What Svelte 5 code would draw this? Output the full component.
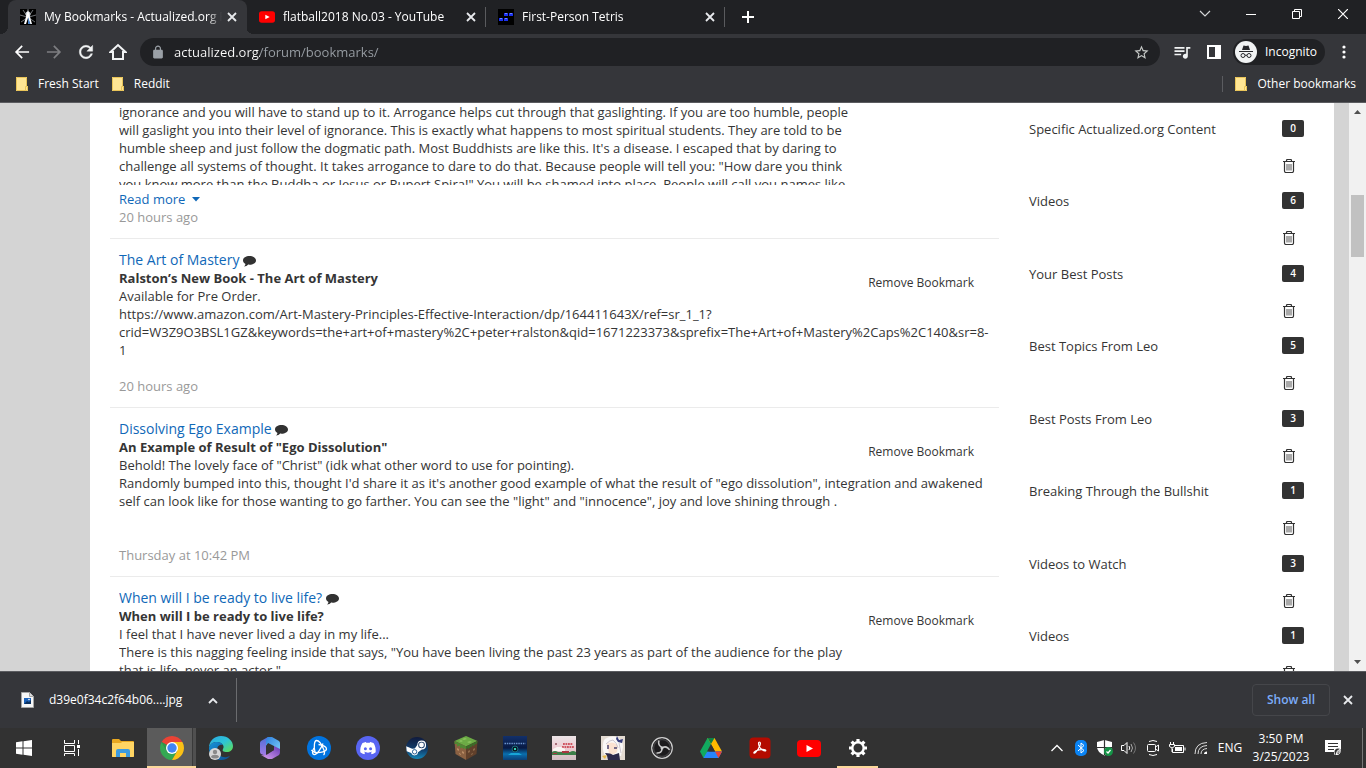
<script>
    let url = 'actualized.org/forum/bookmarks/';
    let expanded = false;

    let tabs = [
        {title: 'My Bookmarks - Actualized.org Forum', icon: 'actualized'},
        {title: 'flatball2018 No.03 - YouTube', icon: 'youtube'},
        {title: 'First-Person Tetris', icon: 'tetris'},
    ];
    let active_tab = tabs[0];

    let posts = [
        {
            title: 'The Art of Mastery',
            heading: 'Ralston’s New Book - The Art of Mastery',
            lines: [
                'Available for Pre Order.',
                'https://www.amazon.com/Art-Mastery-Principles-Effective-Interaction/dp/164411643X/ref=sr_1_1?crid=W3Z9O3BSL1GZ&keywords=the+art+of+mastery%2C+peter+ralston&qid=1671223373&sprefix=The+Art+of+Mastery%2Caps%2C140&sr=8-1',
                '',
            ],
            date: '20 hours ago',
        },
        {
            title: 'Dissolving Ego Example',
            heading: 'An Example of Result of "Ego Dissolution"',
            lines: [
                'Behold! The lovely face of "Christ" (idk what other word to use for pointing).',
                'Randomly bumped into this, thought I\'d share it as it\'s another good example of what the result of "ego dissolution", integration and awakened self can look like for those wanting to go farther. You can see the "light" and "innocence", joy and love shining through .',
                '',
                '',
            ],
            date: 'Thursday at 10:42 PM',
        },
        {
            title: 'When will I be ready to live life?',
            heading: 'When will I be ready to live life?',
            lines: [
                'I feel that I have never lived a day in my life...',
                'There is this nagging feeling inside that says, "You have been living the past 23 years as part of the audience for the play that is life, never an actor."',
            ],
            truncated: true,
        },
    ];

    let folders = [
        {name: 'Specific Actualized.org Content', count: 0},
        {name: 'Videos', count: 6},
        {name: 'Your Best Posts', count: 4},
        {name: 'Best Topics From Leo', count: 5},
        {name: 'Best Posts From Leo', count: 3},
        {name: 'Breaking Through the Bullshit', count: 1},
        {name: 'Videos to Watch', count: 3},
        {name: 'Videos', count: 1},
    ];

    function remove_post(post) {
        posts = posts.filter(p => p !== post);
    }

    function remove_folder(folder) {
        folders = folders.filter(f => f !== folder);
    }
</script>

{#snippet cross()}
<svg width="10" height="10" viewBox="0 0 10 10"><path d="M1 1l8 8M9 1l-8 8" stroke="#e8eaed" stroke-width="1.8"/></svg>
{/snippet}

{#snippet folder_icon()}
<svg width="14" height="16" viewBox="0 0 14 16">
    <path d="M1 1h11v9h1v5H1z" fill="#ffe694"/>
    <path d="M1.500 1.500h10v9M1.500 1.500v13h9v-4h2v4h-2" fill="none" stroke="#e9c458"/>
</svg>
{/snippet}

{#snippet youtube(width, height)}
<svg {width} {height} viewBox="0 0 24 17">
    <rect width="24" height="17" rx="4" fill="#f00"/>
    <path d="M9.500 5v7l6.500-3.500z" fill="#fff"/>
</svg>
{/snippet}

<div class="window">
    <header class="tab-strip">
        <div class="tabs">
            {#each tabs as tab}
            <div class="tab" class:active={tab === active_tab}>
                <button class="tab-main" on:click={() => active_tab = tab}>
                    <span class="favicon">
                        {#if tab.icon === 'actualized'}
                        <svg width="16" height="16" viewBox="0 0 16 16">
                            <rect width="16" height="16" fill="#000"/>
                            <path d="M8 0v7M3 1l4 6M13 1L9 7M0 6l7 2M16 6L9 8M1 13l6-4M15 13L9 9" stroke="#8b8f94" stroke-width=".8"/>
                            <circle cx="8" cy="5" r="2.500" fill="#cfd4d8"/>
                            <path d="M8 1l1.500 5L12 15h-2L8 9l-2 6H4l2.500-9z" fill="#fff"/>
                            <path d="M8 8l2.500 7H8z" fill="#4a83c8"/>
                        </svg>
                        {:else if tab.icon === 'youtube'}
                        {@render youtube(16, 12)}
                        {:else}
                        <svg width="16" height="16" viewBox="0 0 16 16">
                            <rect width="16" height="16" fill="#000"/>
                            <path d="M6 4h4v3H6zM11 4h4v3h-4zM1 9h4v3H1zM6 9h4v3H6z" fill="#1b31f0"/>
                            <path d="M7 4h2v1H7zM12 4h2v1h-2zM2 9h2v1H2zM7 9h2v1H7z" fill="#6f87ff"/>
                        </svg>
                        {/if}
                    </span>
                    <span class="tab-title">{tab.title}</span>
                </button>
                <button class="tab-close" aria-label="Close tab">{@render cross()}</button>
            </div>
            {/each}
            <button class="new-tab" aria-label="New tab">
                <svg width="12" height="12" viewBox="0 0 12 12"><path d="M6 0v12M0 6h12" stroke="#fff" stroke-width="2"/></svg>
            </button>
        </div>
        <div class="caption">
            <button aria-label="Search tabs"><svg width="12" height="8" viewBox="0 0 12 8"><path d="M1 1l5 5 5-5" fill="none" stroke="#d5d6d8" stroke-width="1.200"/></svg></button>
            <button aria-label="Minimize"><svg width="10" height="10" viewBox="0 0 10 10"><path d="M0 5.500h10" stroke="#fff"/></svg></button>
            <button aria-label="Restore"><svg width="10" height="10" viewBox="0 0 10 10"><path d="M.5 2.500h7v7h-7zM2.500 2.500v-2h7v7h-2" fill="none" stroke="#fff"/></svg></button>
            <button aria-label="Close"><svg width="10" height="10" viewBox="0 0 10 10"><path d="M0 0l10 10M10 0L0 10" stroke="#fff" stroke-width="1.200"/></svg></button>
        </div>
    </header>

    <div class="toolbar">
        <nav class="nav">
            <button aria-label="Back"><svg width="20" height="20" viewBox="0 0 24 24"><path fill="#fff" d="M20.500 11H7.330l5.590-5.590L11.500 4l-8 8 8 8 1.410-1.410L7.330 13H20.500z"/></svg></button>
            <button aria-label="Forward"><svg width="20" height="20" viewBox="0 0 24 24"><path fill="#7d7e81" d="M3.500 11h13.170l-5.590-5.590L12.500 4l8 8-8 8-1.410-1.410L16.670 13H3.500z"/></svg></button>
            <button aria-label="Reload"><svg width="20" height="20" viewBox="0 0 24 24"><path fill="#f1f3f4" stroke="#f1f3f4" stroke-width=".5" d="M17.650 6.350C16.200 4.900 14.210 4 12 4c-4.420 0-7.990 3.580-7.990 8s3.570 8 7.990 8c3.730 0 6.840-2.550 7.730-6h-2.080c-.82 2.330-3.040 4-5.650 4-3.310 0-6-2.690-6-6s2.690-6 6-6c1.660 0 3.140.69 4.220 1.780L13 11h7V4z"/></svg></button>
            <button aria-label="Home"><svg width="18" height="18" viewBox="0 0 18 18"><path fill="none" stroke="#f1f3f4" stroke-width="2" d="M1.500 9L9 2l7.500 7H14v7H4V9z"/></svg></button>
        </nav>
        <form class="address" on:submit|preventDefault>
            <svg width="12" height="14" viewBox="3 0 18 23"><path fill="#9aa0a6" d="M18 8h-1V6c0-2.760-2.240-5-5-5S7 3.240 7 6v2H6c-1.100 0-2 .9-2 2v10c0 1.100.9 2 2 2h12c1.100 0 2-.9 2-2V10c0-1.100-.9-2-2-2zM9 6c0-1.660 1.340-3 3-3s3 1.340 3 3v2H9z"/></svg>
            <input type="text" aria-label="Address" bind:value={url}>
            <button type="button" aria-label="Bookmark this tab"><svg width="17" height="17" viewBox="0 0 24 24"><path fill="#c4c7c5" d="M22 9.240l-7.190-.62L12 2 9.190 8.630 2 9.240l5.460 4.730L5.820 21 12 17.270 18.180 21l-1.630-7.030zM12 15.400l-3.760 2.270 1-4.280-3.320-2.880 4.380-.38L12 6.100l1.710 4.040 4.380.38-3.320 2.880 1 4.280z"/></svg></button>
        </form>
        <div class="tools">
            <button aria-label="Media"><svg width="20" height="20" viewBox="0 0 24 24"><path fill="#f1f3f4" d="M15 6H3v2h12zM15 10H3v2h12zM3 16h8v-2H3zM17 6v8.180c-.31-.11-.65-.18-1-.18-1.660 0-3 1.340-3 3s1.340 3 3 3 3-1.340 3-3V8h3V6z"/></svg></button>
            <button aria-label="Side panel"><svg width="14" height="14" viewBox="0 0 14 14"><path fill="#fff" fill-rule="evenodd" d="M0 0h14v14H0zM2 2v10h6V2z"/></svg></button>
            <button class="incognito">
                <svg width="22" height="22" viewBox="0 0 22 22">
                    <circle cx="11" cy="11" r="11" fill="#f1f3f4"/>
                    <path d="M8.500 4.500l2.500.5 2.500-.5L15 9H7zM4 10h14v1H4z" fill="#26272b"/>
                    <circle cx="8" cy="14.500" r="2" fill="none" stroke="#26272b"/>
                    <circle cx="14" cy="14.500" r="2" fill="none" stroke="#26272b"/>
                    <path d="M10 14.500q1-1 2 0" fill="none" stroke="#26272b"/>
                </svg>
                Incognito
            </button>
            <button class="menu" aria-label="Menu"><svg width="4" height="14" viewBox="0 0 4 14"><circle cx="2" cy="2" r="1.600" fill="#fff"/><circle cx="2" cy="7" r="1.600" fill="#fff"/><circle cx="2" cy="12" r="1.600" fill="#fff"/></svg></button>
        </div>
    </div>

    <nav class="bookmarks-bar">
        <a href="#fresh-start">{@render folder_icon()}Fresh Start</a>
        <a href="#reddit">{@render folder_icon()}Reddit</a>
        <a class="other" href="#other">{@render folder_icon()}Other bookmarks</a>
    </nav>

    <div class="viewport">
        <div class="page">
            <main>
                <article class="post first">
                    <div class="clipped" class:expanded>
                        ignorance and you will have to stand up to it. Arrogance helps cut through that gaslighting. If you are too humble, people will gaslight you into their level of ignorance. This is exactly what happens to most spiritual students. They are told to be humble sheep and just follow the dogmatic path. Most Buddhists are like this. It's a disease. I escaped that by daring to challenge all systems of thought. It takes arrogance to dare to do that. Because people will tell you: "How dare you think you know more than the Buddha or Jesus or Rupert Spira!" You will be shamed into place. People will call you names like
                    </div>
                    <button class="read-more" on:click={() => expanded = !expanded}>
                        Read more
                        <svg width="8" height="5" viewBox="0 0 8 5"><path d="M0 0h8L4 4.500z" fill="#1068b8"/></svg>
                    </button>
                    <time>20 hours ago</time>
                </article>
                {#each posts as post (post)}
                <article class="post">
                    <button class="remove" on:click={() => remove_post(post)}>Remove Bookmark</button>
                    <div class:truncated={post.truncated}>
                        <h4>
                            <a href="#topic">{post.title}</a>
                            <svg width="13" height="12" viewBox="0 0 13 12"><path d="M6.500 1C3 1 0 2.800 0 5.400c0 1.500 1 2.800 2.500 3.500C2.300 10 1.700 10.900 1 11.600c1.700-.1 3.200-.9 4.200-2 .4.100.9.100 1.300.1 3.500 0 6.500-1.800 6.500-4.300S10 1 6.500 1z" fill="#323232"/></svg>
                        </h4>
                        <h5>{post.heading}</h5>
                        {#each post.lines as line}
                        <p>{line}</p>
                        {/each}
                        {#if post.date}
                        <time>{post.date}</time>
                        {/if}
                    </div>
                </article>
                {/each}
            </main>
            <aside>
                <ul>
                    {#each folders as folder (folder)}
                    <li>
                        <a href="#folder">{folder.name}</a>
                        <span class="count">{folder.count}</span>
                        <button aria-label="Delete folder" on:click={() => remove_folder(folder)}>
                            <svg width="12" height="14" viewBox="0 0 12 14">
                                <path d="M0 2.500h12M3.500 2V1.500q0-1 1-1h3q1 0 1 1V2M1.500 3v9q0 1.500 1.500 1.500h6q1.500 0 1.500-1.500V3" fill="none" stroke="#323232" stroke-width="1.200"/>
                                <path d="M4 5v6.500M6 5v6.500M8 5v6.500" stroke="#555"/>
                            </svg>
                        </button>
                    </li>
                    {/each}
                </ul>
            </aside>
        </div>
        <div class="scrollbar">
            <svg width="7" height="4" viewBox="0 0 7 4"><path d="M0 4h7L3.500 0z" fill="#505050"/></svg>
            <div class="track"><div class="thumb"></div></div>
            <svg width="7" height="4" viewBox="0 0 7 4"><path d="M0 0h7L3.500 4z" fill="#505050"/></svg>
        </div>
    </div>

    <div class="downloads">
        <button class="download">
            <svg width="13" height="16" viewBox="0 0 13 16">
                <path d="M.5.5h8l4 4v11H.5z" fill="#f7f7f7" stroke="#a5a5a5"/>
                <path d="M8.500.5v4h4" fill="#ddd" stroke="#a5a5a5"/>
                <path d="M3 6h7v6H3z" fill="#1c62b9"/>
                <path d="M3 12l3-3 2 1 2-2v4z" fill="#0c315f"/>
                <circle cx="8" cy="7.500" r=".8" fill="#fff"/>
            </svg>
            <span>d39e0f34c2f64b06....jpg</span>
            <svg width="10" height="7" viewBox="0 0 10 7"><path d="M1 6l4-4 4 4" fill="none" stroke="#e8eaed" stroke-width="1.800"/></svg>
        </button>
        <button class="show-all">Show all</button>
        <button class="close-shelf" aria-label="Close downloads">{@render cross()}</button>
    </div>

    <footer class="taskbar">
        <button class="start" aria-label="Start">
            <svg width="16" height="16" viewBox="0 0 16 16"><path d="M0 2.200L6.500 1.300v6.200H0zM7.500 1.200L16 0v7.500H7.500zM0 8.500h6.500v6.200L0 13.800zM7.500 8.500H16V16l-8.500-1.200z" fill="#fff"/></svg>
        </button>
        <button class="start" aria-label="Task view">
            <svg width="16" height="16" viewBox="0 0 16 16" fill="none" stroke="#fff"><path d="M.5 0v3.500h10V0M.5 5.500h10v6H.5zM.5 16v-2.500h10V16M14.500 0v4M14.500 9v7"/><path d="M13 5h3v3h-3z" fill="#fff" stroke="none"/></svg>
        </button>
        <div class="apps">
            <button aria-label="File Explorer">
                <svg width="22" height="18" viewBox="0 0 22 18">
                    <path d="M0 1q0-1 1-1h6l2 2h12q1 0 1 1v14q0 1-1 1H0z" fill="#e9a820"/>
                    <path d="M0 4h9l1-1h12v14q0 1-1 1H1q-1 0-1-1z" fill="#ffd563"/>
                    <path d="M4 18v-6q0-2 2-2h10q2 0 2 2v6h-4v-4H8v4z" fill="#3c9be0"/>
                </svg>
            </button>
            <button class="running front" aria-label="Chrome">
                <svg width="24" height="24" viewBox="0 0 24 24">
                    <path d="M12 12L1.610 6A12 12 0 0 1 22.390 6z" fill="#ea4335"/>
                    <path d="M1.610 6A12 12 0 0 0 12 24l5.200-9L12 12 6.800 15z" fill="#34a853"/>
                    <path d="M22.390 6H12l5.200 9L12 24A12 12 0 0 0 22.390 6z" fill="#fbc116"/>
                    <path d="M1.610 6L6.800 15 12 12z" fill="#2b9a49"/>
                    <circle cx="12" cy="12" r="6" fill="#fff"/>
                    <circle cx="12" cy="12" r="4.700" fill="#4285f4"/>
                </svg>
            </button>
            <button aria-label="Edge">
                <svg width="24" height="24" viewBox="0 0 24 24">
                    <defs>
                        <linearGradient id="edge-top" x1="0" y1="0" x2="1" y2="1"><stop offset="0" stop-color="#2aa7e1"/><stop offset=".5" stop-color="#2ec4d6"/><stop offset="1" stop-color="#62e04c"/></linearGradient>
                        <linearGradient id="edge-low" x1="0" y1="0" x2="1" y2="1"><stop offset="0" stop-color="#1593d8"/><stop offset="1" stop-color="#0d4d93"/></linearGradient>
                    </defs>
                    <path d="M0 12C0 5 5 0 12 0s12 5 12 10c0 4-3 6-6 6-4 0-5-1-4-3 2-3-1-7-6-7-4 0-7 2-8 6z" fill="url(#edge-top)"/>
                    <path d="M0 12c1-4 4-6 8-6 3 0 5 1 6 3-4-1-6 2-6 5 0 5 5 8 10 7l3-1c-2 2.500-5 4-9 4C5 24 0 19 0 12z" fill="url(#edge-low)"/>
                    <circle cx="6" cy="18" r="6" fill="#d7d7d7"/>
                    <circle cx="6" cy="16" r="2.200" fill="#8a8a8a"/>
                    <path d="M2 21c0-3 8-3 8 0-2 2-6 2-8 0z" fill="#8a8a8a"/>
                </svg>
            </button>
            <button aria-label="Microsoft 365">
                <svg width="22" height="22" viewBox="0 0 22 22">
                    <defs>
                        <linearGradient id="m-left" x1="0" y1="0" x2="0" y2="1"><stop offset="0" stop-color="#4f6fd8"/><stop offset="1" stop-color="#a77be6"/></linearGradient>
                        <linearGradient id="m-right" x1="0" y1="0" x2="1" y2="1"><stop offset="0" stop-color="#2c7fe0"/><stop offset="1" stop-color="#7fd0f8"/></linearGradient>
                        <linearGradient id="m-low" x1="0" y1="1" x2="1" y2="0"><stop offset="0" stop-color="#e0a4f3"/><stop offset="1" stop-color="#6438b4"/></linearGradient>
                    </defs>
                    <path d="M9 0L2 4Q1 5 1 6v9q0 1 1 2l5 2V9l2-4z" fill="url(#m-left)"/>
                    <path d="M9 0h4l7 4q1 1 1 2v9l-6-3V9L9 6 7 9V4q0-3 2-4z" fill="url(#m-right)"/>
                    <path d="M21 12v3q0 2-1 3l-7 4H9l-7-4q4 1 7-1l6-4V9l4 2z" fill="url(#m-low)"/>
                    <path d="M9 7l6 3v3l-6 3-2-2V9z" fill="#333"/>
                </svg>
            </button>
            <button aria-label="Battle.net">
                <svg width="24" height="24" viewBox="0 0 24 24">
                    <circle cx="12" cy="12" r="12" fill="#0074e0"/>
                    <g fill="none" stroke="#fff" stroke-width="1.300">
                        <path d="M8 16C6.500 10 7.500 4.500 9.500 4.500c2 0 5 3.500 7 8.500"/>
                        <path d="M8 16.500c6 .5 11.500-1 11.500-3.500 0-2-3.500-4-8-4.500"/>
                        <path d="M16 7.500c-2 5-6 11.500-9 11-2-.5-2-3 0-6.500M16.500 13q2 4.500 0 6"/>
                        <path d="M4.500 14q1.500 2 4 2.500"/>
                    </g>
                </svg>
            </button>
            <button aria-label="Discord">
                <svg width="24" height="24" viewBox="0 0 24 24">
                    <circle cx="12" cy="12" r="12" fill="#5865f2"/>
                    <path d="M17.500 6.900a13 13 0 0 0-3.300-1l-.5.900a12 12 0 0 0-3.400 0l-.5-.9a13 13 0 0 0-3.300 1C4.600 10 4 13 4.300 16.200a13 13 0 0 0 4 2l.9-1.500-1.300-.7.400-.2c2.400 1.100 5 1.100 7.400 0l.4.200-1.300.7.900 1.500a13 13 0 0 0 4-2c.3-3.500-.5-6.600-2.200-9.300z" fill="#fff"/>
                    <circle cx="9.400" cy="12.800" r="1.500" fill="#5865f2"/><circle cx="14.600" cy="12.800" r="1.500" fill="#5865f2"/>
                </svg>
            </button>
            <button aria-label="Steam">
                <svg width="24" height="24" viewBox="0 0 24 24">
                    <defs><linearGradient id="steam" x1="0" y1="0" x2="0" y2="1"><stop offset="0" stop-color="#101a3c"/><stop offset=".6" stop-color="#124170"/><stop offset="1" stop-color="#1387b8"/></linearGradient></defs>
                    <circle cx="12" cy="12" r="11" fill="url(#steam)"/>
                    <path d="M1.200 10.200l6 2.500 2.600-.2 2.500-3.600a4.400 4.400 0 1 1 4.600 4.500l-3.900 2.800a3.500 3.500 0 0 1-6.800.8L1.700 15.200z" fill="#fff"/>
                    <circle cx="16.500" cy="9" r="3.300" fill="#173760"/><circle cx="16.500" cy="9" r="2.400" fill="#fff"/>
                    <circle cx="9.600" cy="15.800" r="2.200" fill="none" stroke="#17518a" stroke-width=".9"/>
                </svg>
            </button>
            <button aria-label="Minecraft">
                <svg width="24" height="24" viewBox="0 0 24 24">
                    <path d="M12 0l11.500 5L12 10.500.5 5z" fill="#6cab45"/>
                    <path d="M.5 5L12 10.500V24L1.500 18z" fill="#8b6142"/>
                    <path d="M23.500 5L12 10.500V24l10.500-6z" fill="#61402b"/>
                    <path d="M.5 5L12 10.500v3l-2-2v2l-2-2-2 1v-3l-3 1V8L.6 8z" fill="#4f8933"/>
                    <path d="M23.500 5L12 10.500v3l2-2v2l3-3v1l2-3v2l2-2 2-1z" fill="#3b6d28"/>
                    <path d="M3 12l2 1v2l-2-1zM8 15l2 1v2l-2-1zM5 17l2 1v1l-2-1z" fill="#b98c65"/>
                    <path d="M14 15l2-1v2l-2 1zM19 13l2-1v2l-2 1zM17 18l2-1v1l-2 1z" fill="#8d684a"/>
                    <path d="M8 3l3-1 2 1-3 1zM13 6l3-1 2 1-3 1zM5 5l2-1 2 1-2 1z" fill="#8bc45f"/>
                </svg>
            </button>
            <button aria-label="Crazy Roll 3D">
                <svg width="24" height="24" viewBox="0 0 24 24">
                    <defs><linearGradient id="roll" x1="0" y1="0" x2="0" y2="1"><stop offset="0" stop-color="#12306a"/><stop offset=".5" stop-color="#081a44"/><stop offset=".75" stop-color="#0a6fae"/><stop offset="1" stop-color="#0b3f78"/></linearGradient></defs>
                    <rect width="24" height="24" fill="url(#roll)"/>
                    <path d="M1.500 7.500h21" stroke="#6b93cc" stroke-width="1.500" stroke-dasharray="1.500 .8"/>
                    <path d="M5 19h14l-3-2H8z" fill="#17a6d8"/>
                    <circle cx="12" cy="13" r="3" fill="#071525" stroke="#1c6f7c"/>
                    <path d="M11 12l2 2M13 12l-2 2" stroke="#39d0b0"/>
                </svg>
            </button>
            <button aria-label="Super Bunny Man">
                <svg width="24" height="24" viewBox="0 0 24 24">
                    <defs><linearGradient id="bunny" x1="0" y1="0" x2="0" y2="1"><stop offset="0" stop-color="#ebe4e6"/><stop offset=".5" stop-color="#efcbd2"/><stop offset="1" stop-color="#cfbfc2"/></linearGradient></defs>
                    <rect width="24" height="24" fill="url(#bunny)"/>
                    <path d="M11 8h10M10 11h12" stroke="#cf5560" stroke-width="1.800" stroke-dasharray="1.800 .7"/>
                    <path d="M1 13l4-2h4l4 2v2H1z" fill="#faf6f3"/>
                    <path d="M0 16q3-2 6 0h12q3-2 6 0v3H0z" fill="#3d7f49"/>
                    <path d="M1 17h4v1H1zM10 15h7v2h-7z" fill="#a83740"/>
                    <circle cx="4" cy="8" r="1" fill="#8f4c59"/>
                </svg>
            </button>
            <button aria-label="Genshin Impact">
                <svg width="24" height="24" viewBox="0 0 24 24">
                    <rect width="24" height="24" fill="#e3dbd2"/>
                    <path d="M3 4Q8-1 16 1q6 3 6 10l-2 9H4Q0 12 3 4z" fill="#faf8f7"/>
                    <path d="M6 8q6-4 11 2l-1 6q-4 4-8 1z" fill="#fbe2d1"/>
                    <path d="M7 9v4M13 12h3" stroke="#4b4470" stroke-width="1.500"/>
                    <path d="M5 8q4-4 7-4 4 3 5 8M18 7l2 10" stroke="#cdc6cf" fill="none"/>
                    <path d="M16 0l2 4 4-1-1 4-4-1-2-3z" fill="#353c7b"/>
                    <path d="M4 17q6 0 8 2l6-2 1 7H7q0-4-3-7z" fill="#2c294a"/>
                    <path d="M1 20l5-1-2 4z" fill="#e6b94d"/>
                </svg>
            </button>
            <button aria-label="OBS Studio">
                <svg width="22" height="22" viewBox="0 0 22 22" fill="none">
                    <circle cx="11" cy="11" r="10.300" fill="#1c1b1d" stroke="#d0d0d0" stroke-width="1.200"/>
                    <circle cx="11" cy="11" r="8.500" stroke="#3f3e40" stroke-width="1.500"/>
                    <g stroke="#c9c9c9" stroke-width="1.500">
                        <path d="M11 10.500Q6.500 8 8 3.500"/>
                        <path d="M11.500 10.500Q16 8.500 18.500 13"/>
                        <path d="M11 11.500q0 5-5.500 4.500"/>
                    </g>
                    <circle cx="11" cy="11" r="1.500" fill="#d0d0d0"/>
                </svg>
            </button>
            <button aria-label="Google Drive">
                <svg width="22" height="20" viewBox="0 0 22 20">
                    <path d="M7.500 0H11l3 5-7 12-3.500 3L0 13.500z" fill="#11a95f"/>
                    <path d="M7.500 0h7L22 13.500h-7z" fill="#ffba00"/>
                    <path d="M7.300 13.500H22L18.500 20h-15z" fill="#2684fc"/>
                    <path d="M15 13.500h7L18.500 20z" fill="#ea4335"/>
                    <path d="M7.500 0h7L11 6z" fill="#0c8045"/>
                    <path d="M11 6l4 7.500H7z" fill="#333"/>
                </svg>
            </button>
            <button aria-label="Adobe Acrobat">
                <svg width="22" height="22" viewBox="0 0 22 22">
                    <rect x=".5" y=".5" width="21" height="21" rx="4" fill="#b30b00"/>
                    <path d="M10.500 5c2 0 .5 6-4 10.500-2 1.500-2.500 0 0-1.500 3-1.500 8-2 10-1 1 1-1 1.500-3 0-3-2-4-5-4-7 0-1 .5-1 1-1z" fill="none" stroke="#fff" stroke-width="1.200"/>
                </svg>
            </button>
            <button aria-label="YouTube">{@render youtube(24, 17)}</button>
            <button class="running single" aria-label="Settings">
                <svg width="20" height="20" viewBox="0 0 20 20" fill="none" stroke="#fff">
                    <circle cx="10" cy="10" r="5.700" stroke-width="2.400"/>
                    <path d="M10 1v3M10 16v3M1 10h3M16 10h3M3.600 3.600l2.100 2.100M14.300 14.300l2.100 2.100M3.600 16.400l2.100-2.100M14.300 5.700l2.100-2.100" stroke-width="3.200"/>
                </svg>
            </button>
        </div>
        <div class="tray">
            <button aria-label="Hidden icons"><svg width="12" height="8" viewBox="0 0 12 8"><path d="M.5 7L6 1.500 11.500 7" fill="none" stroke="#fff" stroke-width="1.300"/></svg></button>
            <button aria-label="Bluetooth"><svg width="12" height="16" viewBox="0 0 12 16"><rect width="12" height="16" rx="5" fill="#0a84f5"/><path d="M3 5l6 5.500L6 13V3l3 2.500L3 11" fill="none" stroke="#fff"/></svg></button>
            <button aria-label="Security"><svg width="16" height="16" viewBox="0 0 16 16"><path d="M7.500 0L15 2v5q0 5-7.500 8.500Q0 12 0 7V2z" fill="#fff"/><path d="M7.500 0v15M0 7.500h15" stroke="#333" stroke-width="1.200"/><circle cx="11.500" cy="11.500" r="4.500" fill="#159447"/><path d="M9.500 11.500l1.500 1.500 2.500-3" fill="none" stroke="#fff" stroke-width="1.200"/></svg></button>
            <button aria-label="Volume"><svg width="16" height="14" viewBox="0 0 16 14" fill="none" stroke="#fff"><path d="M.5 4.500H3l3-3v11l-3-3H.5zM8 5q1.500 2 0 4"/><path d="M10 3q3 4 0 8" stroke="#aaa"/><path d="M12.500 1.500q4 5.500 0 11" stroke="#777"/></svg></button>
            <button aria-label="Meet now"><svg width="12" height="16" viewBox="0 0 12 16" fill="none" stroke="#fff"><rect x=".5" y="4.500" width="8" height="7" rx="1"/><path d="M8.500 7l3-2v6l-3-2M2 1.500q4-2 8 0M2 14.500q4 2 8 0"/></svg></button>
            <button aria-label="Battery"><svg width="17" height="12" viewBox="0 0 17 12" fill="none" stroke="#fff"><path d="M5 3.500h9.500v7h-11V7M16 5.500v3M1.500 0v2M4.500 0v2M.5 2.500h5v2q-2.500 3-5 0zM3 6v4"/><path d="M6 5h7v4H6z" fill="#fff" stroke="none"/></svg></button>
            <button aria-label="Wi-Fi"><svg width="14" height="14" viewBox="0 0 14 14" fill="none" stroke="#ddd"><path d="M1 13Q1 2 13 1.500M4 13Q4 5 13 4.500M7 13q0-5 6-5.500"/><path d="M10 13q0-2.500 3-2.500V13z" fill="#fff" stroke="none"/></svg></button>
        </div>
        <button class="lang">ENG</button>
        <button class="clock"><span>3:50 PM</span><span>3/25/2023</span></button>
        <button class="notifications" aria-label="Notifications">
            <svg width="17" height="17" viewBox="0 0 17 17"><path d="M0 0h16v12h-4l-3 3v-3H0z" fill="#fff"/><path d="M3 3.500h10M3 6.500h10M3 9.500h6" stroke="#333" stroke-width="1.200"/><circle cx="13" cy="12" r="3.500" fill="#333"/><path d="M11 14.500q5 .5 4-5-3 0-4 5l4-4" fill="none" stroke="#fff"/></svg>
        </button>
    </footer>
</div>

<style>
    :global(body) {
        margin: 0;
        overflow: hidden;
    }

    .window {
        display: flex;
        flex-direction: column;
        height: 100vh;
        background: #35363a;
        color: #fff;
        font: 12px/16px 'Open Sans', sans-serif;
    }

    button {
        display: flex;
        align-items: center;
        justify-content: center;
        padding: 0;
        border: none;
        background: none;
        color: inherit;
        font: inherit;
    }

    a {
        color: inherit;
        text-decoration: none;
    }

    svg {
        flex: none;
    }

    /* tab strip */
    .tab-strip {
        display: flex;
        justify-content: space-between;
        height: 34px;
        padding-left: 8px;
        background: #202124;
    }

    .tabs {
        display: flex;
        align-items: center;
    }

    .tab {
        display: flex;
        position: relative;
        align-items: center;
        box-sizing: border-box;
        width: 239px;
        height: 20px;
        padding: 0 4px 0 12px;
        border-right: 1px solid #5a5b5e;
    }
    .tab.active {
        height: 34px;
        border-right-color: transparent;
        border-radius: 8px 8px 0 0;
        background: #35363a;
    }
    /* the feet that flare out under the active tab */
    .tab.active::before,
    .tab.active::after {
        content: '';
        position: absolute;
        bottom: 0;
        width: 8px;
        height: 8px;
    }
    .tab.active::before {
        right: 100%;
        background: radial-gradient(circle at 0 0, transparent 8px, #35363a 8px);
    }
    .tab.active::after {
        left: 100%;
        background: radial-gradient(circle at 100% 0, transparent 8px, #35363a 8px);
    }

    .tab-main {
        flex: 1;
        gap: 8px;
        min-width: 0;
        justify-content: flex-start;
    }

    .favicon {
        display: flex;
        width: 16px;
    }

    .tab-title {
        flex: 1;
        overflow: hidden;
        text-align: left;
        white-space: nowrap;
        mask-image: linear-gradient(90deg, #000 92%, transparent);
    }

    .tab-close {
        width: 20px;
        height: 16px;
    }

    .new-tab {
        width: 28px;
        height: 28px;
        margin-left: 9px;
    }

    .caption {
        display: flex;
    }
    .caption button {
        width: 46px;
        height: 28px;
    }

    /* toolbar */
    .toolbar {
        display: flex;
        align-items: center;
        height: 36px;
        padding-left: 6px;
    }

    .nav {
        display: flex;
        width: 134px;
    }
    .nav button {
        width: 32px;
        height: 28px;
    }

    .address {
        display: flex;
        flex: 1;
        align-items: center;
        gap: 10px;
        height: 28px;
        padding: 0 10px 0 12px;
        border-radius: 14px;
        background: #202124;
    }
    .address input {
        flex: 1;
        min-width: 0;
        padding: 0;
        border: none;
        outline: none;
        /* host in white, path in grey */
        background: linear-gradient(90deg, #fff 86px, #9aa0a6 86px);
        background-clip: text;
        color: transparent;
        font: 13px/18px 'Open Sans', sans-serif;
    }

    .tools {
        display: flex;
        align-items: center;
        padding-left: 6px;
    }
    .tools button {
        width: 32px;
        height: 28px;
    }
    .tools .incognito {
        gap: 8px;
        justify-content: flex-start;
        width: 92px;
        height: 26px;
        margin-left: 3px;
        padding-left: 2px;
        border-radius: 13px;
        background: #202124;
    }
    .tools .menu {
        width: 41px;
        padding-right: 3px;
    }

    .bookmarks-bar {
        display: flex;
        align-items: center;
        gap: 12px;
        height: 28px;
        padding: 0 10px 4px 15px;
        border-bottom: 1px solid #5b5c60;
    }
    .bookmarks-bar a {
        display: flex;
        align-items: center;
        gap: 9px;
    }
    .bookmarks-bar .other {
        margin-left: auto;
        padding-left: 11px;
        border-left: 1px solid #5b5c60;
    }

    /* page */
    .viewport {
        display: flex;
        flex: 1;
        min-height: 0;
        overflow: hidden;
        background: #d4d4d4;
        color: #353535;
        font: 13px/18px 'Open Sans', sans-serif;
    }

    .page {
        display: flex;
        flex: 1;
        min-width: 0;
        margin: 0 15px 0 90px;
        padding: 0 30px 0 20px;
        background: #fff;
    }

    main {
        flex: 1;
        min-width: 0;
    }

    .post {
        padding: 12px 9px;
        border-bottom: 1px solid #ebebeb;
    }
    .post.first {
        padding-top: 0;
    }
    .post h4,
    .post h5,
    .post p {
        margin: 0;
        font-size: 13px;
    }
    .post h4 {
        height: 18px;
        font-size: 14px;
        font-weight: 400;
    }
    .post h4 a,
    .read-more {
        color: #1068b8;
    }
    .post h4 svg {
        vertical-align: -2px;
    }
    .post p {
        min-height: 18px;
        overflow-wrap: break-word;
    }

    .clipped {
        height: 82px;
        margin: 0 130px 5px 0;
        overflow: hidden;
    }
    .clipped.expanded {
        height: auto;
    }

    .read-more {
        gap: 7px;
    }

    .truncated {
        overflow: hidden;
    }

    time {
        display: block;
        color: #999;
    }

    .remove {
        float: right;
        height: 30px;
        margin-top: 17px;
        padding: 0 16px 0 10px;
        font-size: 12px;
    }

    aside {
        flex: none;
        width: 275px;
        padding: 17px 0 0 30px;
    }
    aside ul {
        display: grid;
        grid-template-rows: repeat(4, 72px 73px);
        margin: 0;
        padding: 0;
        list-style: none;
    }
    aside li {
        display: grid;
        grid-template-columns: 1fr 22px;
        grid-template-rows: 17px 22px 14px;
        align-items: center;
    }
    aside li button {
        grid-column: 2;
        grid-row: 3;
        justify-content: flex-start;
        padding-left: 1px;
    }

    .count {
        border-radius: 2px;
        background: #323232;
        color: #fff;
        font-size: 10px;
        font-weight: 600;
        line-height: 17px;
        text-align: center;
    }

    .scrollbar {
        display: flex;
        flex-direction: column;
        align-items: center;
        justify-content: space-between;
        width: 17px;
        padding: 7px 0;
        box-sizing: border-box;
        background: #f1f1f1;
    }
    .track {
        flex: 1;
        width: 13px;
    }
    .thumb {
        height: 62px;
        margin-top: 81px;
        background: #c1c1c1;
    }

    /* downloads shelf */
    .downloads {
        display: flex;
        align-items: center;
        height: 56px;
        padding-right: 13px;
        border-top: 1px solid #5b5c60;
    }

    .download {
        height: 44px;
        padding: 0 18px 0 21px;
        border-right: 1px solid #6b6c6f;
    }
    .download span {
        margin: 0 26px 0 15px;
    }

    .show-all {
        width: 78px;
        height: 32px;
        margin: 0 13px 0 auto;
        border: 1px solid #45464a;
        border-radius: 4px;
        color: #7cacf8;
        font-weight: 600;
    }

    /* taskbar */
    .taskbar {
        display: flex;
        height: 40px;
        background: #323232;
    }

    .start {
        width: 48px;
    }

    .apps {
        display: flex;
        flex: 1;
        padding-left: 2px;
    }
    .apps button {
        width: 49px;
        border: solid transparent;
        border-width: 2px 0;
    }
    .apps .running {
        border-bottom-color: #fbd89b;
    }
    .apps .single {
        width: 41px;
        margin: 0 4px;
    }
    /* a second window peeks out behind the front one */
    .apps .front {
        background: linear-gradient(90deg, #5b5b5b 45px, #3a3a3a 45px, #3a3a3a 46px, #505050 46px) border-box;
    }

    .tray {
        display: flex;
    }
    .tray button {
        width: 24px;
    }

    .lang {
        width: 34px;
    }

    .clock {
        flex-direction: column;
        width: 68px;
        line-height: 18px;
    }

    .notifications {
        width: 48px;
        margin-right: 3px;
        padding-right: 11px;
        border-right: 1px solid #777;
    }
</style>
